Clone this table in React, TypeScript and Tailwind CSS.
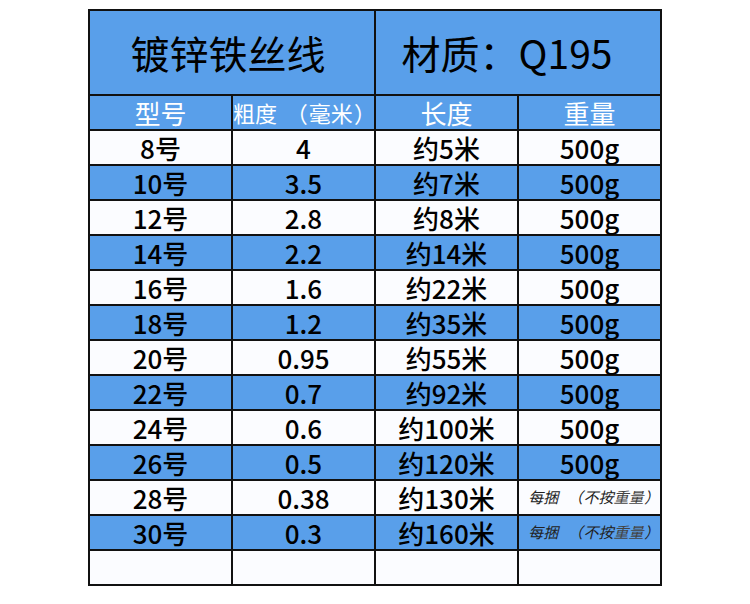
const rows: [string, string, string, string | null][] = [
  ["8号", "4", "约5米", "500g"],
  ["10号", "3.5", "约7米", "500g"],
  ["12号", "2.8", "约8米", "500g"],
  ["14号", "2.2", "约14米", "500g"],
  ["16号", "1.6", "约22米", "500g"],
  ["18号", "1.2", "约35米", "500g"],
  ["20号", "0.95", "约55米", "500g"],
  ["22号", "0.7", "约92米", "500g"],
  ["24号", "0.6", "约100米", "500g"],
  ["26号", "0.5", "约120米", "500g"],
  ["28号", "0.38", "约130米", null],
  ["30号", "0.3", "约160米", null],
];

const cell = "h-[35px] flex items-center justify-center border-r-2 border-b-2 border-[#111]";

const Open = () => <span className="ml-[0.4em] mr-[0.05em]">（</span>;
const Close = () => <span className="ml-[0.05em] mr-[0.1em]">）</span>;

export default function App() {
  return (
    <div
      lang="zh-CN"
      className="w-[750px] h-[604px] bg-white pt-[9px] pl-[88px]"
      style={{ fontFamily: '"Noto Sans CJK SC", "Noto Sans", sans-serif' }}
    >
      <div className="w-[574px] border-l-2 border-t-2 border-[#111] grid grid-cols-[143px_143px_143px_143px]">
        <div className="col-span-2 h-[85px] bg-[#599fea] border-r-2 border-b-2 border-[#111] flex items-center justify-center pr-[8px] text-[39px] text-black">
          镀锌铁丝线
        </div>
        <div className="col-span-2 h-[85px] bg-[#599fea] border-r-2 border-b-2 border-[#111] flex items-center justify-center pr-[22px] text-[39px] text-black">
          材质：Q195
        </div>

        <div className={`${cell} bg-[#599fea] text-white text-[26px]`}>型号</div>
        <div className={`${cell} bg-[#599fea] text-white text-[22px] pl-[4px] whitespace-nowrap`}>
          粗度<Open />毫米<Close />
        </div>
        <div className={`${cell} bg-[#599fea] text-white text-[26px]`}>长度</div>
        <div className={`${cell} bg-[#599fea] text-white text-[26px]`}>重量</div>

        {rows.map(([a, b, c, d], i) => {
          const bg = i % 2 === 0 ? "bg-[#fbfcff]" : "bg-[#599fea]";
          return [
            <div key={`a${i}`} className={`${cell} ${bg} text-[26px] font-medium text-black`}>{a}</div>,
            <div key={`b${i}`} className={`${cell} ${bg} text-[26px] font-medium text-black`}>{b}</div>,
            <div key={`c${i}`} className={`${cell} ${bg} text-[26px] font-medium text-black`}>{c}</div>,
            <div key={`d${i}`} className={`${cell} ${bg} text-black whitespace-nowrap ${d ? "text-[26px] font-medium" : "text-[15px] italic pl-[10px]"}`}>
              {d ?? (
                <span className="text-[#222]">
                  每捆 <Open />不按<span className="text-[#444]">重量</span><Close />
                </span>
              )}
            </div>,
          ];
        })}

        <div className={`${cell} bg-[#fbfcff]`} />
        <div className={`${cell} bg-[#fbfcff]`} />
        <div className={`${cell} bg-[#fbfcff]`} />
        <div className={`${cell} bg-[#fbfcff]`} />
      </div>
    </div>
  );
}
